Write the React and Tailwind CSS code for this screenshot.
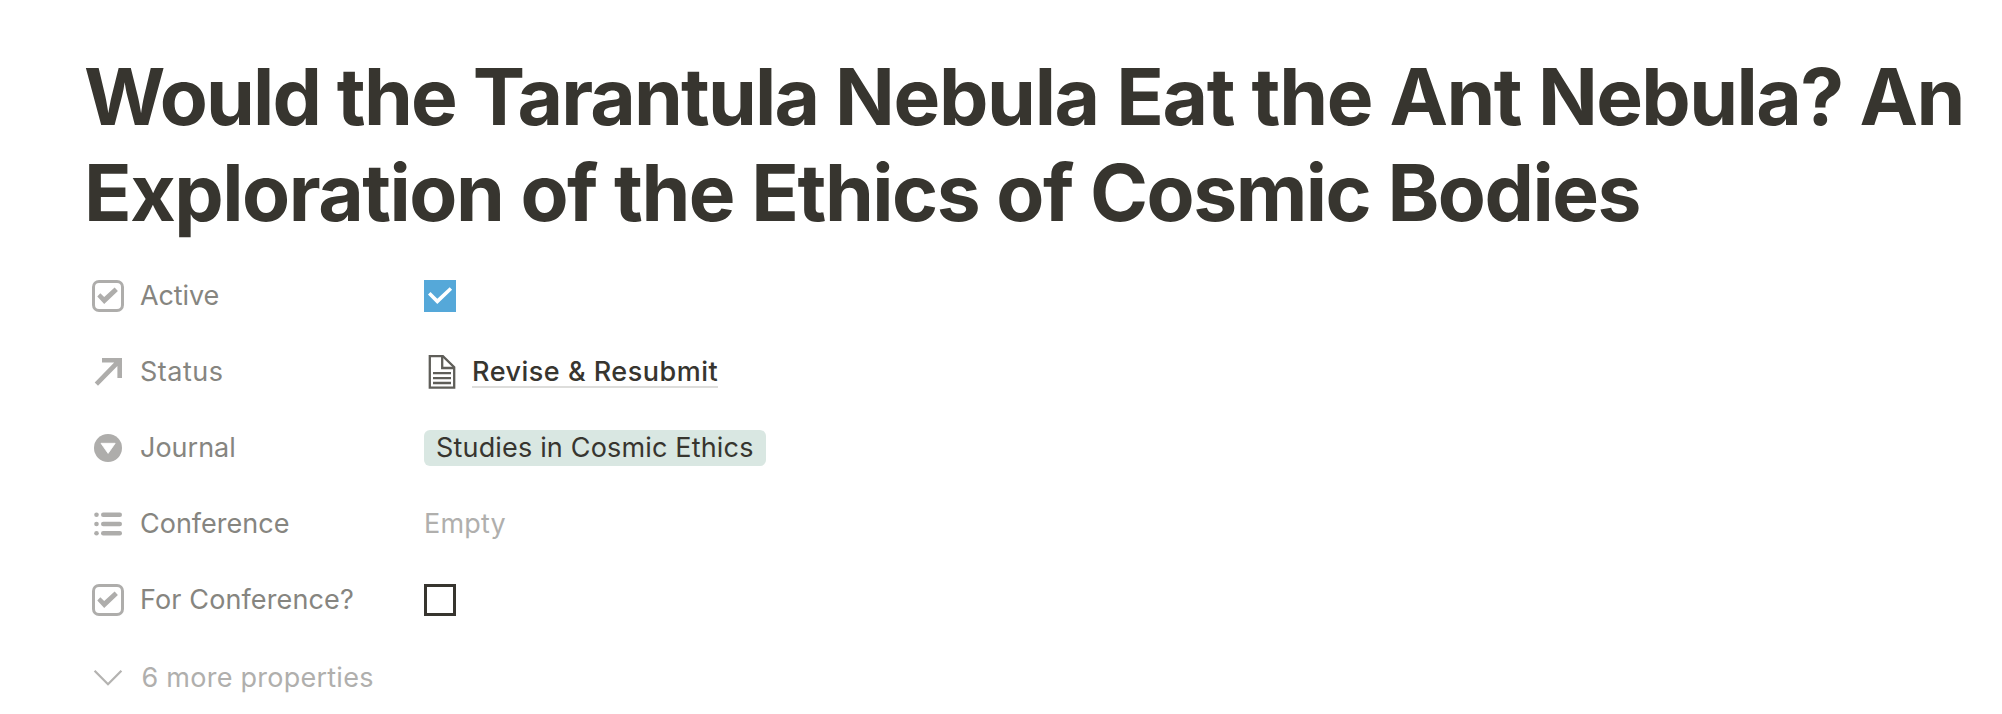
function CheckboxIcon() {
  return (
    <svg width="32" height="32" viewBox="0 0 32 32" fill="none">
      <rect x="1.5" y="1.5" width="29" height="29" rx="5.5" stroke="#aeadab" strokeWidth="3" />
      <path d="M5.3 16.4 8.3 13.3 12.2 17 22.6 7.6 25.9 11 12.2 23.9Z" fill="#aeadab" />
    </svg>
  );
}

function RelationIcon() {
  return (
    <svg width="32" height="32" viewBox="0 0 32 32" fill="#aeadab">
      <path d="M10 2H30V22H25.4V9.9L6 29.7 2.7 26.4 22.2 6.6H10Z" />
    </svg>
  );
}

function SelectIcon() {
  return (
    <svg width="32" height="32" viewBox="0 0 32 32">
      <circle cx="16" cy="16" r="14" fill="#aeadab" />
      <path d="M9 11.3H23.2L16.1 21.4Z" fill="#fff" stroke="#fff" strokeWidth="0.8" strokeLinejoin="round" />
    </svg>
  );
}

function MultiSelectIcon() {
  return (
    <svg width="32" height="32" viewBox="0 0 32 32" fill="#aeadab">
      <circle cx="4.5" cy="6.8" r="2.3" />
      <circle cx="4.5" cy="16" r="2.3" />
      <circle cx="4.5" cy="25.2" r="2.3" />
      <rect x="9" y="4.6" width="21" height="4.4" rx="2.2" />
      <rect x="9" y="13.8" width="21" height="4.4" rx="2.2" />
      <rect x="9" y="23" width="21" height="4.4" rx="2.2" />
    </svg>
  );
}

function PageIcon() {
  return (
    <svg width="32" height="36" viewBox="0 0 32 36" fill="none" stroke="#5f5e59" strokeWidth="2.3">
      <path d="M5.8 2.1H18.9L30.2 13.2V33.6H5.8Z" />
      <path d="M18.2 2V14H30.2" />
      <path d="M9 19.1H27M9 24.1H27M9 29H27" />
    </svg>
  );
}

function Row({ icon, label, tracking, children }) {
  return (
    <div className="flex h-[76px] items-center">
      <div className="flex w-[332px] items-center gap-4">
        {icon}
        <span className={`text-[#868580] ${tracking}`}>{label}</span>
      </div>
      {children}
    </div>
  );
}

export default function App() {
  return (
    <main className="h-[714px] w-[2002px] overflow-hidden bg-white pt-[49px] font-[Inter,'Liberation_Sans',sans-serif] text-[27px] leading-[38px] whitespace-nowrap text-[#37352f]">
      <h1 className="pl-[84px] text-[78.5px] leading-[96px] font-bold">
        <span className="block tracking-[-1.6px]">
          <span className="tracking-[-1.84px]">Would the Tarantula </span>
          <span className="tracking-[-1.3px]">Nebula Eat the </span>
          Ant Nebula? An
        </span>
        <span className="block tracking-[-1.48px]">Exploration of the Ethics of Cosmic Bodies</span>
      </h1>
      <section className="pt-[17px] pl-[92px]">
        <Row icon={<CheckboxIcon />} label="Active" tracking="tracking-[-0.1px]">
          <span className="size-8 bg-[#55a8d9]">
            <svg width="32" height="32" viewBox="0 0 32 32" fill="#fff">
              <path d="M4 14.6 6.5 12.1 13.3 18.8 25.7 7.3 28.1 9.8 13.3 24.1Z" />
            </svg>
          </span>
        </Row>
        <Row icon={<RelationIcon />} label="Status" tracking="tracking-[0.5px]">
          <a className="flex items-center">
            <PageIcon />
            <span className="ml-4 h-8 border-b-2 border-[#dddddb] leading-8 font-medium tracking-[0.5px]">
              Revise &amp; Resubmit
            </span>
          </a>
        </Row>
        <Row icon={<SelectIcon />} label="Journal" tracking="tracking-normal">
          <span className="flex h-9 w-[342px] items-center rounded-md bg-[#d9e7e2] pl-3 tracking-[0.17px]">
            Studies in Cosmic Ethics
          </span>
        </Row>
        <Row icon={<MultiSelectIcon />} label="Conference" tracking="tracking-normal">
          <span className="tracking-[0.2px] text-[#b0afad]">Empty</span>
        </Row>
        <Row icon={<CheckboxIcon />} label="For Conference?" tracking="tracking-[0.12px]">
          <span className="size-8 border-3 border-[#37352f]" />
        </Row>
        <div className="mt-[21px] flex items-center gap-[17.5px] text-[#b0afad]">
          <svg width="32" height="32" viewBox="0 0 32 32" fill="none" stroke="#b4b3b1" strokeWidth="2.3">
            <path d="M2.6 8.8 16 22.2 29.4 8.8" />
          </svg>
          <span className="tracking-[0.25px]">6 more properties</span>
        </div>
      </section>
    </main>
  );
}
